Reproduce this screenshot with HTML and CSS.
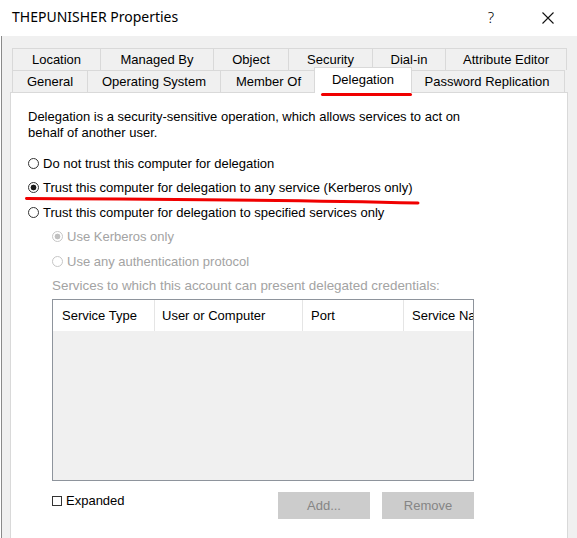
FILE: index.html
```html
<!DOCTYPE html>
<html>
<head>
<meta charset="utf-8">
<link rel="stylesheet" href="styles.css">
</head>
<body>
<div class="titlebar">
  <span class="title">THEPUNISHER Properties</span>
  <span class="help">?</span>
  <span class="close"><svg width="12" height="12" viewBox="0 0 12 12"><path d="M0.5 0.5 L11.5 11.5 M11.5 0.5 L0.5 11.5" stroke="#111" stroke-width="1.1" fill="none"/></svg></span>
</div>
<div class="frame">
  <div class="tabs">
    <div class="tabrow">
      <div class="tab t-location">Location</div>
      <div class="tab t-managed">Managed By</div>
      <div class="tab t-object">Object</div>
      <div class="tab t-security">Security</div>
      <div class="tab t-dialin">Dial-in</div>
      <div class="tab t-attr last">Attribute Editor</div>
    </div>
    <div class="tabrow">
      <div class="tab t-general">General</div>
      <div class="tab t-os">Operating System</div>
      <div class="tab t-member">Member Of</div>
      <div class="tab t-deleg active">Delegation<span class="mark-tab"></span></div>
      <div class="tab t-pass last">Password Replication</div>
    </div>
  </div>
  <div class="panel">
    <p class="intro">Delegation is a security-sensitive operation, which allows services to act on behalf of another user.</p>
    <div class="options">
      <div class="opt"><span class="radio"></span>Do not trust this computer for delegation</div>
      <div class="opt"><span class="radio on"></span>Trust this computer for delegation to any service (Kerberos only)<svg class="mark-line" width="398" height="10" viewBox="0 0 398 10"><path d="M2.5 2.5 C 130 3, 280 4.2, 394 7" stroke="#f00000" stroke-width="3" stroke-linecap="round" fill="none"/></svg></div>
      <div class="opt"><span class="radio"></span>Trust this computer for delegation to specified services only</div>
      <div class="opt sub disabled"><span class="radio on dis"></span>Use Kerberos only</div>
      <div class="opt sub disabled"><span class="radio dis"></span>Use any authentication protocol</div>
      <div class="opt sub disabled services">Services to which this account can present delegated credentials:</div>
    </div>
    <div class="list">
      <div class="list-head">
        <div class="col c1">Service Type</div>
        <div class="col c2">User or Computer</div>
        <div class="col c3">Port</div>
        <div class="col c4">Service Name</div>
      </div>
    </div>
    <div class="footer">
      <div class="check"><span class="box"></span>Expanded</div>
      <div class="buttons">
        <div class="btn">Add...</div>
        <div class="btn">Remove</div>
      </div>
    </div>
  </div>
</div>
</body>
</html>
```
FILE: styles.css
```css
* { box-sizing: border-box; }
html, body { margin: 0; padding: 0; }
body {
  width: 577px;
  height: 538px;
  overflow: hidden;
  background: #ffffff;
  font-family: "Liberation Sans", Arial, sans-serif;
  font-size: 13px;
  color: #000;
}
.titlebar {
  height: 36px;
  display: flex;
  align-items: center;
  background: #fff;
}
.title {
  font-family: "Noto Sans", sans-serif;
  font-size: 14px;
  padding-left: 12px;
  color: #000;
  flex: 1;
  line-height: 20px;
  margin-top: -2px;
}
.help {
  font-family: "Noto Sans", sans-serif;
  font-size: 15px;
  font-weight: 300;
  width: 46px;
  text-align: center;
  margin-top: -2px;
}
.close {
  width: 46px;
  display: flex;
  justify-content: center;
  margin-left: 11px;
  margin-right: 6px;
}
.close svg { display: block; }
.frame {
  margin-left: 1px;
  border-left: 1px solid #8a8a8a;
  background: #f0f0f0;
  height: 502px;
  padding: 12px 0 0 8px;
}
.tabs { padding-left: 2px; }
.tabrow { display: flex; }
.tab {
  height: 22px;
  border-top: 1px solid #d9d9d9;
  border-left: 1px solid #d9d9d9;
  text-align: center;
  line-height: 21px;
  white-space: nowrap;
  background: #f0f0f0;
}
.tab.last { border-right: 1px solid #d9d9d9; }
.t-location { width: 88px; }
.t-managed { width: 113px; }
.t-object { width: 75px; }
.t-security { width: 84px; }
.t-dialin { width: 73px; }
.t-attr { width: 122px; }
.t-general { width: 75px; }
.t-os { width: 133px; }
.t-member { width: 96px; }
.t-deleg { width: 98px; }
.t-pass { width: 155px; border-left: none; }
.tab.active {
  position: relative;
  z-index: 2;
  background: #fff;
  height: 26px;
  margin: -3px -2px -1px -2px;
  border-right: 1px solid #d9d9d9;
  line-height: 24px;
}
.mark-tab {
  position: absolute;
  left: 6px;
  right: -1px;
  top: 25px;
  height: 3px;
  background: #f00000;
  border-radius: 2px;
}
.panel {
  width: 558px;
  height: 446px;
  background: #fff;
  border: 1px solid #d9d9d9;
  border-bottom: none;
  padding: 16px 0 0 17px;
}
.intro {
  margin: 0;
  max-width: 450px;
  line-height: 16px;
}
.options { margin-top: 10px; }
.opt {
  position: relative;
  height: 24.5px;
  display: flex;
  align-items: center;
  white-space: nowrap;
}
.opt.sub { padding-left: 24px; }
.opt.disabled { color: #a3a3a3; }
.opt.services { font-size: 13.4px; }
.radio {
  width: 11px;
  height: 11px;
  border: 1px solid #333;
  border-radius: 50%;
  margin-right: 4px;
  background: #fff;
  flex: none;
}
.radio.on { background: radial-gradient(circle, #1a1a1a 0 2.6px, #fff 3.2px); }
.radio.dis { border-color: #c6c6c6; }
.radio.on.dis { background: radial-gradient(circle, #c0c0c0 0 2.6px, #fff 3.2px); }
.mark-line {
  position: absolute;
  left: -4px;
  top: 20px;
}
.list {
  margin: 1px 0 0 24px;
  width: 422px;
  height: 182px;
  border: 1px solid #8e949c;
  background: #f0f0f0;
  overflow: hidden;
}
.list-head {
  height: 31px;
  background: #fff;
  display: flex;
  white-space: nowrap;
  overflow: hidden;
}
.col {
  flex: none;
  line-height: 31px;
  padding-left: 8px;
  border-right: 1px solid #e5e5e5;
}
.c1 { width: 102px; padding-left: 9px; }
.c2 { width: 148px; padding-left: 7px; }
.c3 { width: 101px; padding-left: 8px; }
.c4 { width: 110px; }
.footer {
  margin: 11px 0 0 24px;
  width: 422px;
  display: flex;
  align-items: flex-start;
}
.check {
  display: flex;
  align-items: center;
  line-height: 16px;
  margin-top: 1px;
}
.box {
  width: 10px;
  height: 10px;
  border: 1px solid #333;
  margin-right: 4px;
  background: #fff;
}
.buttons {
  margin-left: auto;
  display: flex;
  gap: 12px;
}
.btn {
  width: 92px;
  height: 27px;
  background: #cccccc;
  color: #858585;
  text-align: center;
  line-height: 27px;
}
```
